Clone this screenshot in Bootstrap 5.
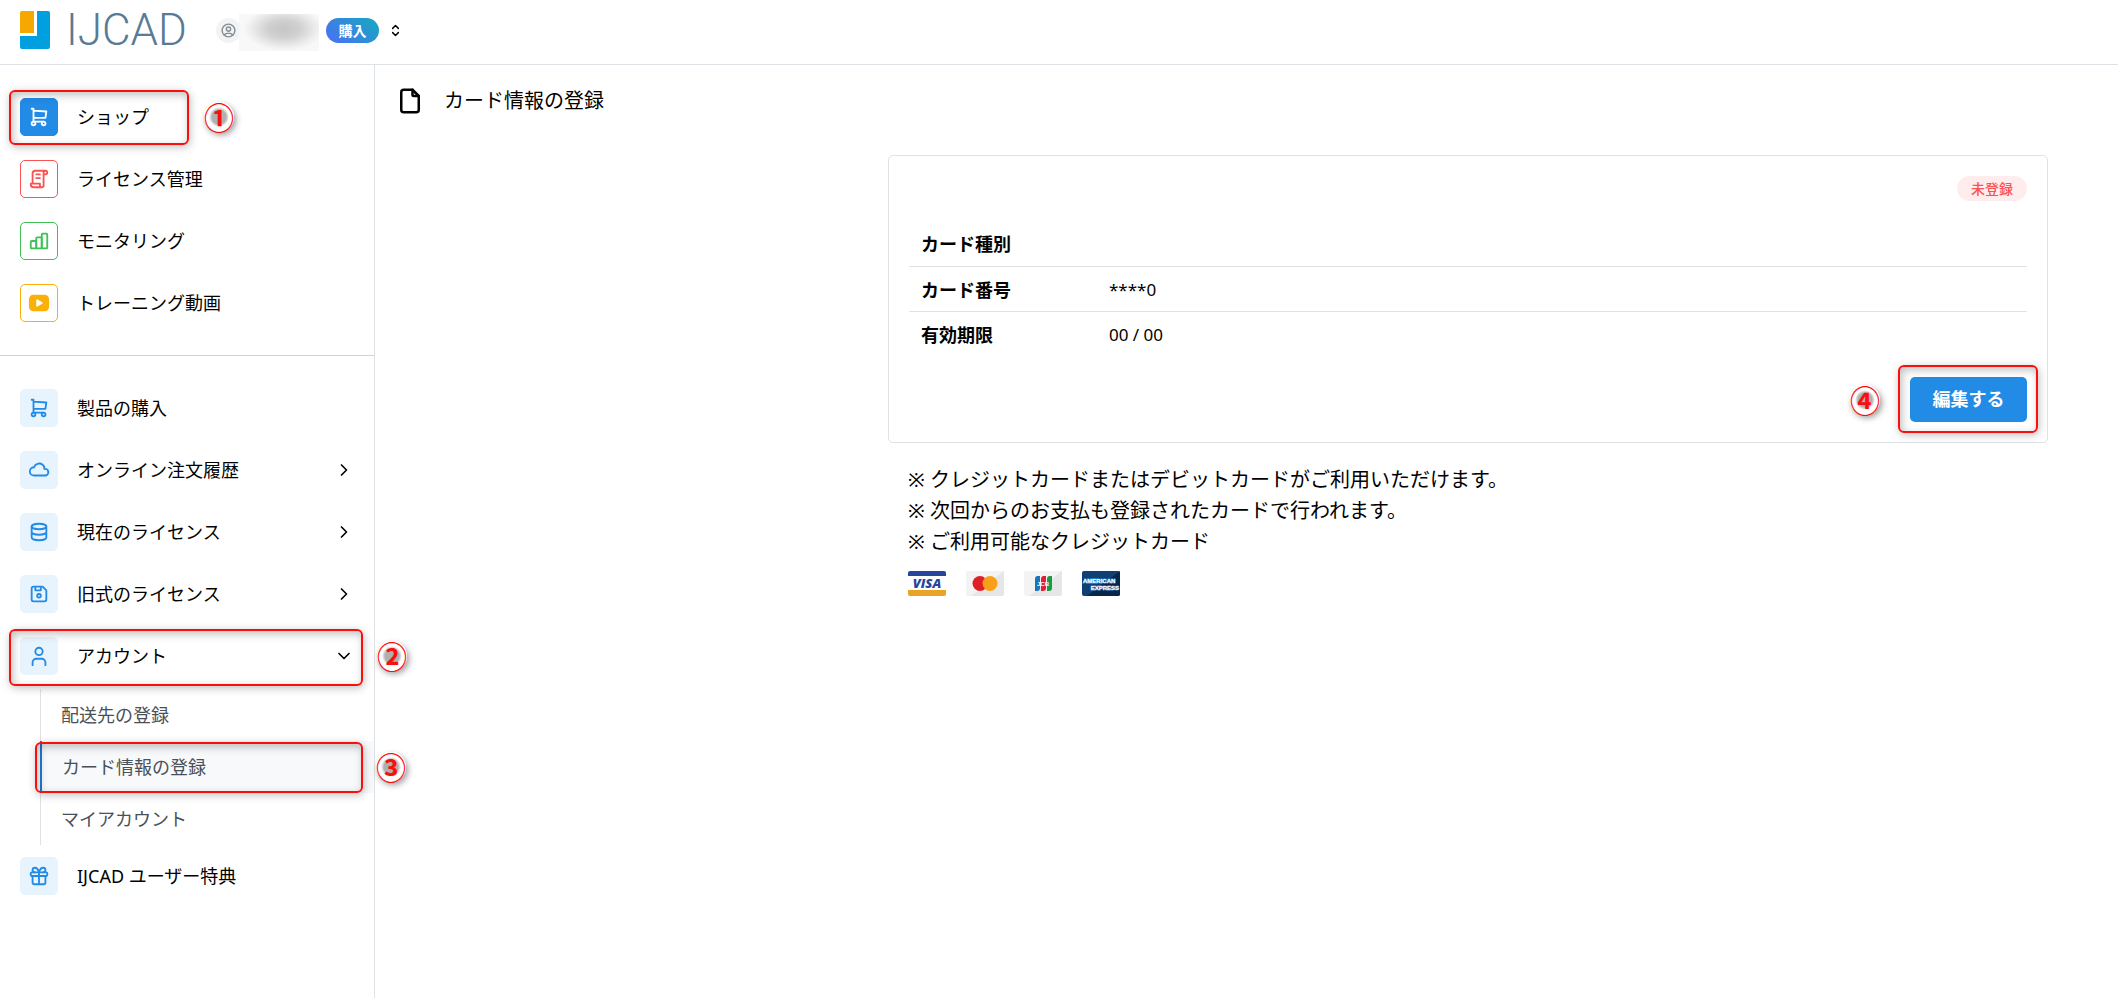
<!DOCTYPE html>
<html lang="ja">
<head>
<meta charset="utf-8">
<meta name="viewport" content="width=device-width, initial-scale=1">
<title>カード情報の登録 | IJCAD</title>
<link href="https://cdn.jsdelivr.net/npm/bootstrap@5.3.0/dist/css/bootstrap.min.css" rel="stylesheet">
<style>
  body { font-family: "Noto Sans", "Noto Sans CJK JP", sans-serif; font-size: 18px; line-height: 24px; color: #000; background: #fff; }
  svg { display: block; flex: none; }
  .ico { fill: none; stroke: currentColor; stroke-width: 2; stroke-linecap: round; stroke-linejoin: round; }
  .line { border-color: #dee2e6 !important; }

  .topbar { height: 65px; padding: 0 20px 4px; }
  .brand { gap: 16px; color: #5b7a94; font: 300 44px/48px Roboto, sans-serif; }
  .brand:hover { color: #5b7a94; }
  .brand span { width: 120px; }
  .user-menu { margin-left: 30px; font-size: 14px; background: none; color: #000; }
  .avatar { width: 25px; height: 25px; background: #f1f3f5; color: #868e96; }
  .masked-name { width: 80px; height: 37px; margin: 4px 7px 0 -2px; background: radial-gradient(ellipse 40px 22px at 56% 40%, #c6c6c6 0, #d0d0d0 40%, #ececec 80%, #f8f8f8 100%); }
  .buy-tag { width: 53px; height: 25px; line-height: 25px; color: #fff; font-size: 14px; font-weight: 700; background: linear-gradient(45deg, #4c6ef5, #15aabf); }

  .sidebar { width: 375px; }
  .menu-top { padding: 21px 0; border-color: #ced4da !important; }
  .menu-main { padding: 21px 0; }
  .menu-item { padding: 12px 20px; gap: 19px; color: #000; font-weight: 400; background: none; line-height: 24px; }
  .tile { width: 38px; height: 38px; border-radius: 5px; border: 1px solid currentColor; }
  .tile-shop { background: #228be6; color: #fff; border-color: #228be6; }
  .tile-red { color: #fa5252; }
  .tile-green { color: #40c057; }
  .tile-yellow { color: #fab005; }
  .tile-light { background: #e7f3fd; color: #228be6; border-color: #e7f3fd; }
  .submenu { margin: 2px 0 0 40px; }
  .submenu a { display: block; padding: 14px 0 14px 20px; border-left: 1px solid #dee2e6; color: #495057; }
  .submenu a.active { background: #f8f9fa; border-left: 2px solid #1c7ed6; }

  /* numbered step call-outs */
  .frame { position: absolute; z-index: 2; pointer-events: none; border: 2px solid #fa0f0f; border-radius: 6px; box-shadow: 1px 2px 8px rgba(0,0,0,.25), inset 2px 3px 8px rgba(0,0,0,.25); }
  .frame-shop { left: 9px; width: 180px; top: 4px; bottom: 3px; }
  .frame-account { left: 9px; right: 11px; top: 4px; bottom: 1px; }
  .frame-card { left: -5px; right: 11px; top: 1px; bottom: 0; }
  .frame-edit { left: -12px; right: -11px; top: -12px; bottom: -11px; }
  .step { position: absolute; z-index: 3; top: 50%; transform: translateY(-50%); width: 30px; height: 30px; border-radius: 50%; text-align: center; font: 700 30px/28px "Noto Sans CJK JP", sans-serif; color: #fa0f0f; background: radial-gradient(circle, #b0b0b0 0 7px, #fff 10px); box-shadow: 2px 3px 6px rgba(0,0,0,.4); }
  .step-shop { left: 204px; }
  .step-side { left: 377px; }
  .submenu .step-side { left: 336px; }
  .step-edit { right: 147px; }

  .page-head { padding: 20px 20px 0 20px; gap: 19px; }
  .page-head h1 { font-size: 20px; line-height: 32px; font-weight: 400; margin: 0; }
  .content { max-width: 1160px; width: calc(100% - 90px); margin: 38px 70px 0 auto; }
  .panel { border: 1px solid #dee2e6; border-radius: 5px; padding: 20px; }
  .state-tag { width: 70px; height: 25px; line-height: 25px; font-size: 14px; font-weight: 500; color: #fa5252; background: #ffecec; }
  .info-table { margin: 20px 0 21px; }
  .info-table th, .info-table td { height: 45px; padding: 2px 12px 0; vertical-align: middle; border-bottom: 1px solid #dee2e6; color: #000; }
  .info-table th { width: 188px; font-weight: 700; }
  .info-table td { font-size: 17px; }
  .info-table tr:last-child > * { border-bottom: 0; }
  .edit-btn { width: 117px; height: 45px; padding: 0; border: 0; border-radius: 5px; background: #228be6; color: #fff; font-size: 18px; font-weight: 700; }
  .edit-btn:hover { background: #1c7ed6; color: #fff; }
  .notes { padding: 21px 20px; font-size: 20px; line-height: 31px; }
  .notes p { margin: 0; }
  .brands { gap: 20px; margin-top: 14px; }
</style>
</head>
<body class="min-vh-100 d-flex flex-column">
<svg class="d-none" aria-hidden="true">
  <symbol id="i-cart" viewBox="0 0 24 24"><circle cx="6" cy="19" r="2"/><circle cx="17" cy="19" r="2"/><path d="M17 17H6V3H4M6 5l14 1-1 7H6"/></symbol>
  <symbol id="i-right" viewBox="0 0 24 24"><path d="m9 6 6 6-6 6"/></symbol>
</svg>

<header class="topbar d-flex align-items-center border-bottom line">
  <a href="#" class="brand d-flex align-items-center text-decoration-none">
    <svg width="30" height="38" viewBox="0 0 30 38"><path fill="#f4a800" d="M2 0h12v22H0V2a2 2 0 0 1 2-2Z"/><path fill="#009fdf" d="M17 0h11a2 2 0 0 1 2 2v34a2 2 0 0 1-2 2H2a2 2 0 0 1-2-2V25h17Z"/></svg>
    <span>IJCAD</span>
  </a>
  <button type="button" class="user-menu btn border-0 p-0 d-flex align-items-center" aria-label="ユーザー">
    <span class="avatar rounded-circle d-flex align-items-center justify-content-center">
      <svg class="ico" width="17" height="17" viewBox="0 0 24 24"><circle cx="12" cy="12" r="9"/><circle cx="12" cy="10" r="3"/><path d="M6.2 18.8A4 4 0 0 1 10 16h4a4 4 0 0 1 3.800 2.800"/></svg>
    </span>
    <span class="masked-name"></span>
    <span class="buy-tag rounded-pill">購入</span>
    <svg class="ico ms-2" width="17" height="17" viewBox="0 0 24 24"><path d="m8 9 4-4 4 4M16 15l-4 4-4-4"/></svg>
  </button>
</header>

<div class="d-flex flex-grow-1">
  <nav class="sidebar flex-shrink-0 border-end line">
    <div class="menu-top border-bottom">
      <div class="position-relative">
        <a href="#" class="menu-item d-flex align-items-center text-decoration-none"><span class="tile tile-shop d-flex align-items-center justify-content-center"><svg class="ico" width="22" height="22"><use href="#i-cart"/></svg></span>ショップ</a>
        <span class="frame frame-shop"></span><span class="step step-shop">①</span>
      </div>
      <a href="#" class="menu-item d-flex align-items-center text-decoration-none"><span class="tile tile-red d-flex align-items-center justify-content-center"><svg class="ico" width="22" height="22" viewBox="0 0 24 24"><path d="M15 21H6a3 3 0 0 1-3-3v-1h10v2a2 2 0 0 0 4 0V5a2 2 0 1 1 2 2h-2M19 3H8a3 3 0 0 0-3 3v11M9 7h4M9 11h4"/></svg></span>ライセンス管理</a>
      <a href="#" class="menu-item d-flex align-items-center text-decoration-none"><span class="tile tile-green d-flex align-items-center justify-content-center"><svg class="ico" width="22" height="22" viewBox="0 0 24 24"><rect x="3" y="12" width="6" height="8" rx="1"/><rect x="9" y="8" width="6" height="12" rx="1"/><rect x="15" y="4" width="6" height="16" rx="1"/></svg></span>モニタリング</a>
      <a href="#" class="menu-item d-flex align-items-center text-decoration-none"><span class="tile tile-yellow d-flex align-items-center justify-content-center"><svg width="22" height="22" viewBox="0 0 24 24"><path fill="currentColor" fill-rule="evenodd" d="M6 3h12a5 5 0 0 1 5 5v8a5 5 0 0 1-5 5H6a5 5 0 0 1-5-5V8a5 5 0 0 1 5-5Zm3 6v6c0 .8.800 1.200 1.500.9l5-3a1 1 0 0 0 0-1.800l-5-3C9.800 7.700 9 8.200 9 9Z"/></svg></span>トレーニング動画</a>
    </div>

    <div class="menu-main">
      <a href="#" class="menu-item d-flex align-items-center text-decoration-none"><span class="tile tile-light d-flex align-items-center justify-content-center"><svg class="ico" width="22" height="22"><use href="#i-cart"/></svg></span>製品の購入</a>
      <a href="#" class="menu-item d-flex align-items-center text-decoration-none"><span class="tile tile-light d-flex align-items-center justify-content-center"><svg class="ico" width="22" height="22" viewBox="0 0 24 24"><path d="M6.700 18C4.100 18 2 16 2 13.500S4.100 9 6.700 9c.4-1.800 1.800-3.200 3.700-3.800 1.900-.5 4-.2 5.500 1 1.500 1.100 2.200 2.900 1.800 4.600h1c1.900 0 3.500 1.600 3.500 3.600S20.600 18 18.700 18Z"/></svg></span><span class="me-auto">オンライン注文履歴</span><svg class="ico" width="20" height="20"><use href="#i-right"/></svg></a>
      <a href="#" class="menu-item d-flex align-items-center text-decoration-none"><span class="tile tile-light d-flex align-items-center justify-content-center"><svg class="ico" width="22" height="22" viewBox="0 0 24 24"><ellipse cx="12" cy="6" rx="8" ry="3"/><path d="M4 6v6c0 1.700 3.600 3 8 3s8-1.300 8-3V6M4 12v6c0 1.700 3.600 3 8 3s8-1.300 8-3v-6"/></svg></span><span class="me-auto">現在のライセンス</span><svg class="ico" width="20" height="20"><use href="#i-right"/></svg></a>
      <a href="#" class="menu-item d-flex align-items-center text-decoration-none"><span class="tile tile-light d-flex align-items-center justify-content-center"><svg class="ico" width="22" height="22" viewBox="0 0 24 24"><path d="M6 4h10l4 4v10a2 2 0 0 1-2 2H6a2 2 0 0 1-2-2V6a2 2 0 0 1 2-2M14 4v4H8V4"/><circle cx="12" cy="14" r="2"/></svg></span><span class="me-auto">旧式のライセンス</span><svg class="ico" width="20" height="20"><use href="#i-right"/></svg></a>
      <div class="position-relative">
        <button type="button" class="menu-item border-0 w-100 text-start d-flex align-items-center" aria-expanded="true"><span class="tile tile-light d-flex align-items-center justify-content-center"><svg class="ico" width="22" height="22" viewBox="0 0 24 24"><circle cx="12" cy="7" r="4"/><path d="M5 22v-3a4 4 0 0 1 4-4h6a4 4 0 0 1 4 4v3"/></svg></span><span class="me-auto">アカウント</span><svg class="ico" width="20" height="20" viewBox="0 0 24 24"><path d="m6 9 6 6 6-6"/></svg></button>
        <span class="frame frame-account"></span><span class="step step-side">②</span>
      </div>
      <div class="submenu">
        <a href="#" class="text-decoration-none">配送先の登録</a>
        <div class="position-relative">
          <a href="#" class="active text-decoration-none" aria-current="page">カード情報の登録</a>
          <span class="frame frame-card"></span><span class="step step-side">③</span>
        </div>
        <a href="#" class="text-decoration-none">マイアカウント</a>
      </div>
      <a href="#" class="menu-item d-flex align-items-center text-decoration-none"><span class="tile tile-light d-flex align-items-center justify-content-center"><svg class="ico" width="22" height="22" viewBox="0 0 24 24"><rect x="3" y="8" width="18" height="4" rx="1"/><path d="M12 8v13M19 12v7a2 2 0 0 1-2 2H7a2 2 0 0 1-2-2v-7M7.500 8a2.500 2.500 0 0 1 0-5C9.300 3 11.100 4.900 12 8c.9-3.100 2.700-5 4.500-5a2.500 2.500 0 0 1 0 5"/></svg></span><span>IJCAD ユーザー特典</span></a>
    </div>
  </nav>

  <main class="flex-grow-1">
    <div class="page-head d-flex align-items-center">
      <svg class="ico" width="30" height="30" viewBox="0 0 24 24"><path d="M14 3v4a1 1 0 0 0 1 1h4"/><path d="M17 21H7a2 2 0 0 1-2-2V5a2 2 0 0 1 2-2h7l5 5v11a2 2 0 0 1-2 2Z"/></svg>
      <h1>カード情報の登録</h1>
    </div>
    <div class="content">
      <section class="panel">
        <div class="d-flex justify-content-end"><span class="state-tag rounded-pill text-center">未登録</span></div>
        <table class="info-table w-100">
          <tbody>
            <tr><th scope="row">カード種別</th><td></td></tr>
            <tr><th scope="row">カード番号</th><td>****0</td></tr>
            <tr><th scope="row">有効期限</th><td>00 / 00</td></tr>
          </tbody>
        </table>
        <div class="d-flex justify-content-end">
          <div class="position-relative">
            <button type="button" class="edit-btn btn">編集する</button>
            <span class="frame frame-edit"></span><span class="step step-edit">④</span>
          </div>
        </div>
      </section>
      <div class="notes">
        <p>※ クレジットカードまたはデビットカードがご利用いただけます。</p>
        <p>※ 次回からのお支払も登録されたカードで行われます。</p>
        <p>※ ご利用可能なクレジットカード</p>
        <div class="brands d-flex">
          <svg width="38" height="25" viewBox="0 0 38 25" role="img" aria-label="VISA"><rect width="38" height="25" rx="2" fill="#fff"/><path fill="#26459b" d="M2 0h34a2 2 0 0 1 2 2v3H0V2a2 2 0 0 1 2-2Z"/><path fill="#e7a427" d="M0 19h38v4a2 2 0 0 1-2 2H2a2 2 0 0 1-2-2Z"/><text x="19" y="17" text-anchor="middle" font-family="Open Sans" font-size="13" font-weight="800" font-style="italic" fill="#26459b">VISA</text></svg>
          <svg width="38" height="25" viewBox="0 0 38 25" role="img" aria-label="Mastercard"><rect width="38" height="25" rx="2" fill="#f3f3f3"/><path fill="#e5e7e7" d="M38 0v23a2 2 0 0 1-2 2H5Z"/><circle cx="14" cy="12.500" r="7.500" fill="#df1f26"/><circle cx="24" cy="12.500" r="7.500" fill="#f9a01b"/></svg>
          <svg width="38" height="25" viewBox="0 0 38 25" role="img" aria-label="JCB"><rect width="38" height="25" rx="2" fill="#f3f3f3"/><path fill="#e5e7e7" d="M38 0v23a2 2 0 0 1-2 2H5Z"/><path fill="#1a74b8" d="M13 5h3v12a3 3 0 0 1-3 3h-2V8a3 3 0 0 1 2-3Z"/><path fill="#e0203a" d="M19 5h3v12a3 3 0 0 1-3 3h-2V8a3 3 0 0 1 2-3Z"/><path fill="#1c9a48" d="M25 5h3v12a3 3 0 0 1-3 3h-2V8a3 3 0 0 1 2-3Z"/><text x="19" y="15" text-anchor="middle" font-family="Liberation Sans" font-size="6" font-weight="700" fill="#fff">JCB</text></svg>
          <svg width="38" height="25" viewBox="0 0 38 25" role="img" aria-label="American Express"><rect width="38" height="25" rx="2" fill="#0f3f73"/><path fill="#06264c" d="M38 0v23a2 2 0 0 1-2 2H5Z"/><text x="1" y="12" font-family="Liberation Sans" font-size="6" font-weight="700" fill="#fff" stroke="#3fa9e8" stroke-width="1" paint-order="stroke">AMERICAN</text><text x="37" y="19" text-anchor="end" font-family="Liberation Sans" font-size="6" font-weight="700" fill="#fff" stroke="#5d93c4" stroke-width="1" paint-order="stroke">EXPRESS</text></svg>
        </div>
      </div>
    </div>
  </main>
</div>
<script src="https://cdn.jsdelivr.net/npm/bootstrap@5.3.0/dist/js/bootstrap.bundle.min.js"></script>
</body>
</html>
